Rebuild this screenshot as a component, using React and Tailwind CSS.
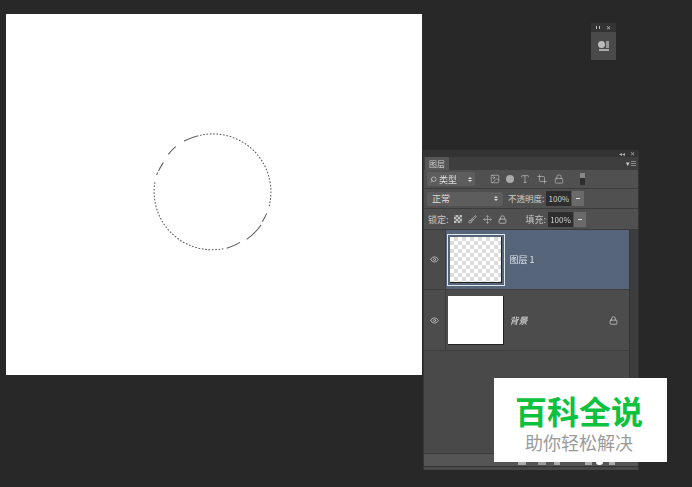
import { Search, Lock, Move, Image as ImageIcon, Type, Crop, Eye, Brush } from 'lucide-react'

const cjk = { fontFamily: '"Noto Sans CJK SC", "Liberation Sans", sans-serif' }

function Spinner() {
  return (
    <span className="flex flex-col gap-[1px]">
      <span className="w-0 h-0 border-x-[2px] border-x-transparent border-b-[2px] border-b-[#ddd]"></span>
      <span className="w-0 h-0 border-x-[2px] border-x-transparent border-t-[2px] border-t-[#ddd]"></span>
    </span>
  )
}

function PercentField() {
  return (
    <div className="flex items-center">
      <div className="w-[25px] h-[15px] bg-[#2d2d2d] text-[#d0d0d0] text-[8px] leading-[15px] text-center">100%</div>
      <div className="w-[12px] h-[15px] ml-[1px] bg-[#6a6a6a] flex items-center justify-center">
        <span className="w-[4px] h-[1px] bg-[#ddd]"></span>
      </div>
    </div>
  )
}

function SelectionCircle() {
  // marching ants: mostly dotted, with a few longer dashes
  return (
    <svg width="135" height="135" viewBox="0 0 405 405" fill="none" stroke="#5c5c5c" strokeWidth="3.2">
      <path d="M165 31 A174 174 0 0 1 372 245" strokeDasharray="5 5" />
      <path d="M235 371 A174 174 0 0 1 30 170" strokeDasharray="5 5" />
      <path d="M365 265 A174 174 0 0 1 352 290" />
      <path d="M348 300 A174 174 0 0 1 305 343" />
      <path d="M285 352 A174 174 0 0 1 245 370" />
      <path d="M35 150 A174 174 0 0 1 42 135" strokeDasharray="8 5" />
      <path d="M42 135 A174 174 0 0 1 55 113" />
      <path d="M70 88 A174 174 0 0 1 92 65" />
      <path d="M117 48 A174 174 0 0 1 160 32" />
    </svg>
  )
}

export default function App() {
  return (
    <div className="relative w-[692px] h-[487px] overflow-hidden bg-[#282828]" style={cjk}>
      {/* document canvas */}
      <div className="absolute left-[6px] top-[14px] w-[416px] h-[361px] bg-white flex items-start">
        <div className="ml-[139px] mt-[111px]">
          <SelectionCircle />
        </div>
      </div>

      {/* collapsed panel */}
      <div className="absolute left-[591px] top-[23px] w-[25px] h-[37px] flex flex-col bg-[#4a4a4a] blur-[0.4px]">
        <div className="h-[9px] bg-[#333] flex items-center justify-between px-[5px]">
          <span className="w-[4px] h-[3px] border-x border-[#bbb]"></span>
          <span className="text-[6px] leading-none text-[#bbb]">✕</span>
        </div>
        <div className="flex-1 flex flex-col items-center pt-[9px] gap-[1px]">
          <div className="flex items-center gap-[1px]">
            <span className="w-[7px] h-[7px] rounded-full bg-[#bbb]"></span>
            <span className="w-[3px] h-[7px] bg-[#999]"></span>
          </div>
          <span className="w-[10px] h-[2px] bg-[#aaa]"></span>
        </div>
      </div>

      {/* layers panel */}
      <div className="absolute left-[423px] top-[150px] w-[216px] h-[320px] flex flex-col bg-[#4b4b4b] border-x border-[#353535] blur-[0.4px]">
        <div className="h-[7px] bg-[#333] flex items-center justify-end gap-[5px] pr-[3px] text-[#aaa] text-[6px] leading-none">
          <span>◂◂</span>
          <span>✕</span>
        </div>
        <div className="h-[13px] bg-[#3e3e3e] flex justify-between items-center pl-[1px]">
          <div className="h-full w-[24px] bg-[#565656] text-[#ccc] text-[8px] leading-[13px] text-center">图层</div>
          <span className="text-[#ccc] text-[7px] leading-none pr-[1px]">▾≡</span>
        </div>

        {/* filter row */}
        <div className="h-[19px] flex items-center border-b border-[#3c3c3c] bg-[#505050] pl-[3px]">
          <div className="w-[48px] h-[14px] rounded-[2px] bg-[#5d5d5d] flex items-center gap-[2px] px-[3px] text-[#ddd] text-[9px]">
            <Search size={7} strokeWidth={2} className="-scale-x-100" />
            <span className="leading-none">类型</span>
            <span className="ml-auto"><Spinner /></span>
          </div>
          <div className="flex items-center gap-[6px] ml-[15px] text-[#c4c4c4]">
            <ImageIcon size={10} strokeWidth={1.5} />
            <span className="w-[8px] h-[8px] rounded-full bg-[#aaa]"></span>
            <Type size={10} strokeWidth={1.5} />
            <Crop size={10} strokeWidth={1.5} className="ml-[1px]" />
            <Lock size={10} strokeWidth={1.5} className="ml-[1px]" />
          </div>
          <div className="ml-[16px] w-[5px] h-[12px] flex flex-col">
            <span className="h-[5px] bg-[#888]"></span>
            <span className="flex-1 bg-[#2e2e2e]"></span>
          </div>
        </div>

        {/* blend mode row */}
        <div className="h-[20px] flex items-center border-b border-[#3c3c3c] bg-[#505050] pl-[3px]">
          <div className="w-[76px] h-[14px] rounded-[2px] bg-[#5d5d5d] flex items-center justify-between px-[5px] text-[#ddd] text-[9px]">
            <span className="leading-none">正常</span>
            <Spinner />
          </div>
          <span className="ml-[5px] text-[#d0d0d0] text-[8.5px] leading-none whitespace-nowrap">不透明度:</span>
          <div className="ml-[2px]"><PercentField /></div>
        </div>

        {/* lock row */}
        <div className="h-[20px] flex items-center bg-[#505050] pl-[4px] text-[#c8c8c8]">
          <span className="text-[9px] leading-none whitespace-nowrap">锁定:</span>
          <div className="flex items-center gap-[6px] ml-[5px]">
            <span className="w-[8px] h-[8px] bg-[repeating-conic-gradient(#bbb_0_25%,#777_0_50%)] bg-[length:4px_4px]"></span>
            <Brush size={9} strokeWidth={1.8} />
            <Move size={9} strokeWidth={1.5} />
            <Lock size={9} strokeWidth={2} />
          </div>
          <span className="ml-[19px] text-[9px] leading-none whitespace-nowrap">填充:</span>
          <div className="ml-[2px]"><PercentField /></div>
        </div>

        {/* layers list + scrollbar */}
        <div className="flex-1 flex min-h-0 border-t border-[#3a3a3a]">
          <div className="flex-1 flex flex-col bg-[#494949]">
            <div className="h-[60px] flex items-center bg-[#56657a] border-b border-[#3d3d3d]">
              <div className="w-[22px] h-full flex items-center justify-center bg-[#4b4b4b] border-r border-[#3d3d3d] text-[#c8c8c8]">
                <Eye size={9} strokeWidth={2} />
              </div>
              <div className="ml-[0.5px] w-[58px] h-[52px] p-[2px] border border-[#dfe6ee]">
                <div className="w-full h-full border-b border-r border-[#222] bg-[repeating-conic-gradient(#dcdcdc_0_25%,#fff_0_50%)] bg-[length:8px_8px]"></div>
              </div>
              <span className="ml-[5px] text-[#dde3ea] text-[9px] leading-none whitespace-nowrap">图层 1</span>
            </div>
            <div className="h-[61px] flex items-center bg-[#4c4c4c] border-b border-[#3d3d3d]">
              <div className="w-[22px] h-full flex items-center justify-center border-r border-[#3d3d3d] text-[#c8c8c8]">
                <Eye size={9} strokeWidth={2} />
              </div>
              <div className="ml-[1.5px] w-[56px] h-[49px] bg-white border-b border-r border-[#222]"></div>
              <span className="ml-[6px] text-[#e0e0e0] text-[9px] italic leading-none">背景</span>
              <Lock size={9} strokeWidth={2} className="ml-auto mr-[11px] text-[#c8c8c8]" />
            </div>
            <div className="flex-1 bg-[#494949]"></div>
          </div>
          <div className="w-[9px] bg-[#3d3d3d] border-l border-[#353535]"></div>
        </div>

        {/* bottom bar */}
        <div className="h-[17px] flex flex-col bg-[#555] border-t border-[#3a3a3a]">
          <div className="flex-1 flex items-end pl-[94px] pb-[1px]">
            <span className="w-[8px] h-[3px] bg-[#aaa]"></span>
            <span className="ml-[12px] w-[8px] h-[3px] bg-[#999]"></span>
            <span className="ml-[8px] w-[6px] h-[3px] bg-[#aaa]"></span>
            <span className="ml-[25px] w-[7px] h-[3px] bg-[#aaa]"></span>
            <span className="ml-[4px] w-[7px] h-[6px] rounded-full bg-white"></span>
            <span className="ml-[6px] w-[6px] h-[3px] bg-[#aaa]"></span>
          </div>
          <div className="h-[4px] bg-[#484848] border-t border-[#333]"></div>
        </div>
      </div>

      {/* watermark */}
      <div className="absolute left-[494px] top-[378px] w-[173px] h-[84px] bg-white flex flex-col items-center pt-[16px] pr-[3px]">
        <span className="text-[32px] leading-[32px] font-bold text-[#0ec13f] whitespace-nowrap">百科全说</span>
        <span className="mt-[6px] text-[18px] leading-[20px] text-[#9b9b9b] whitespace-nowrap">助你轻松解决</span>
      </div>
    </div>
  )
}
